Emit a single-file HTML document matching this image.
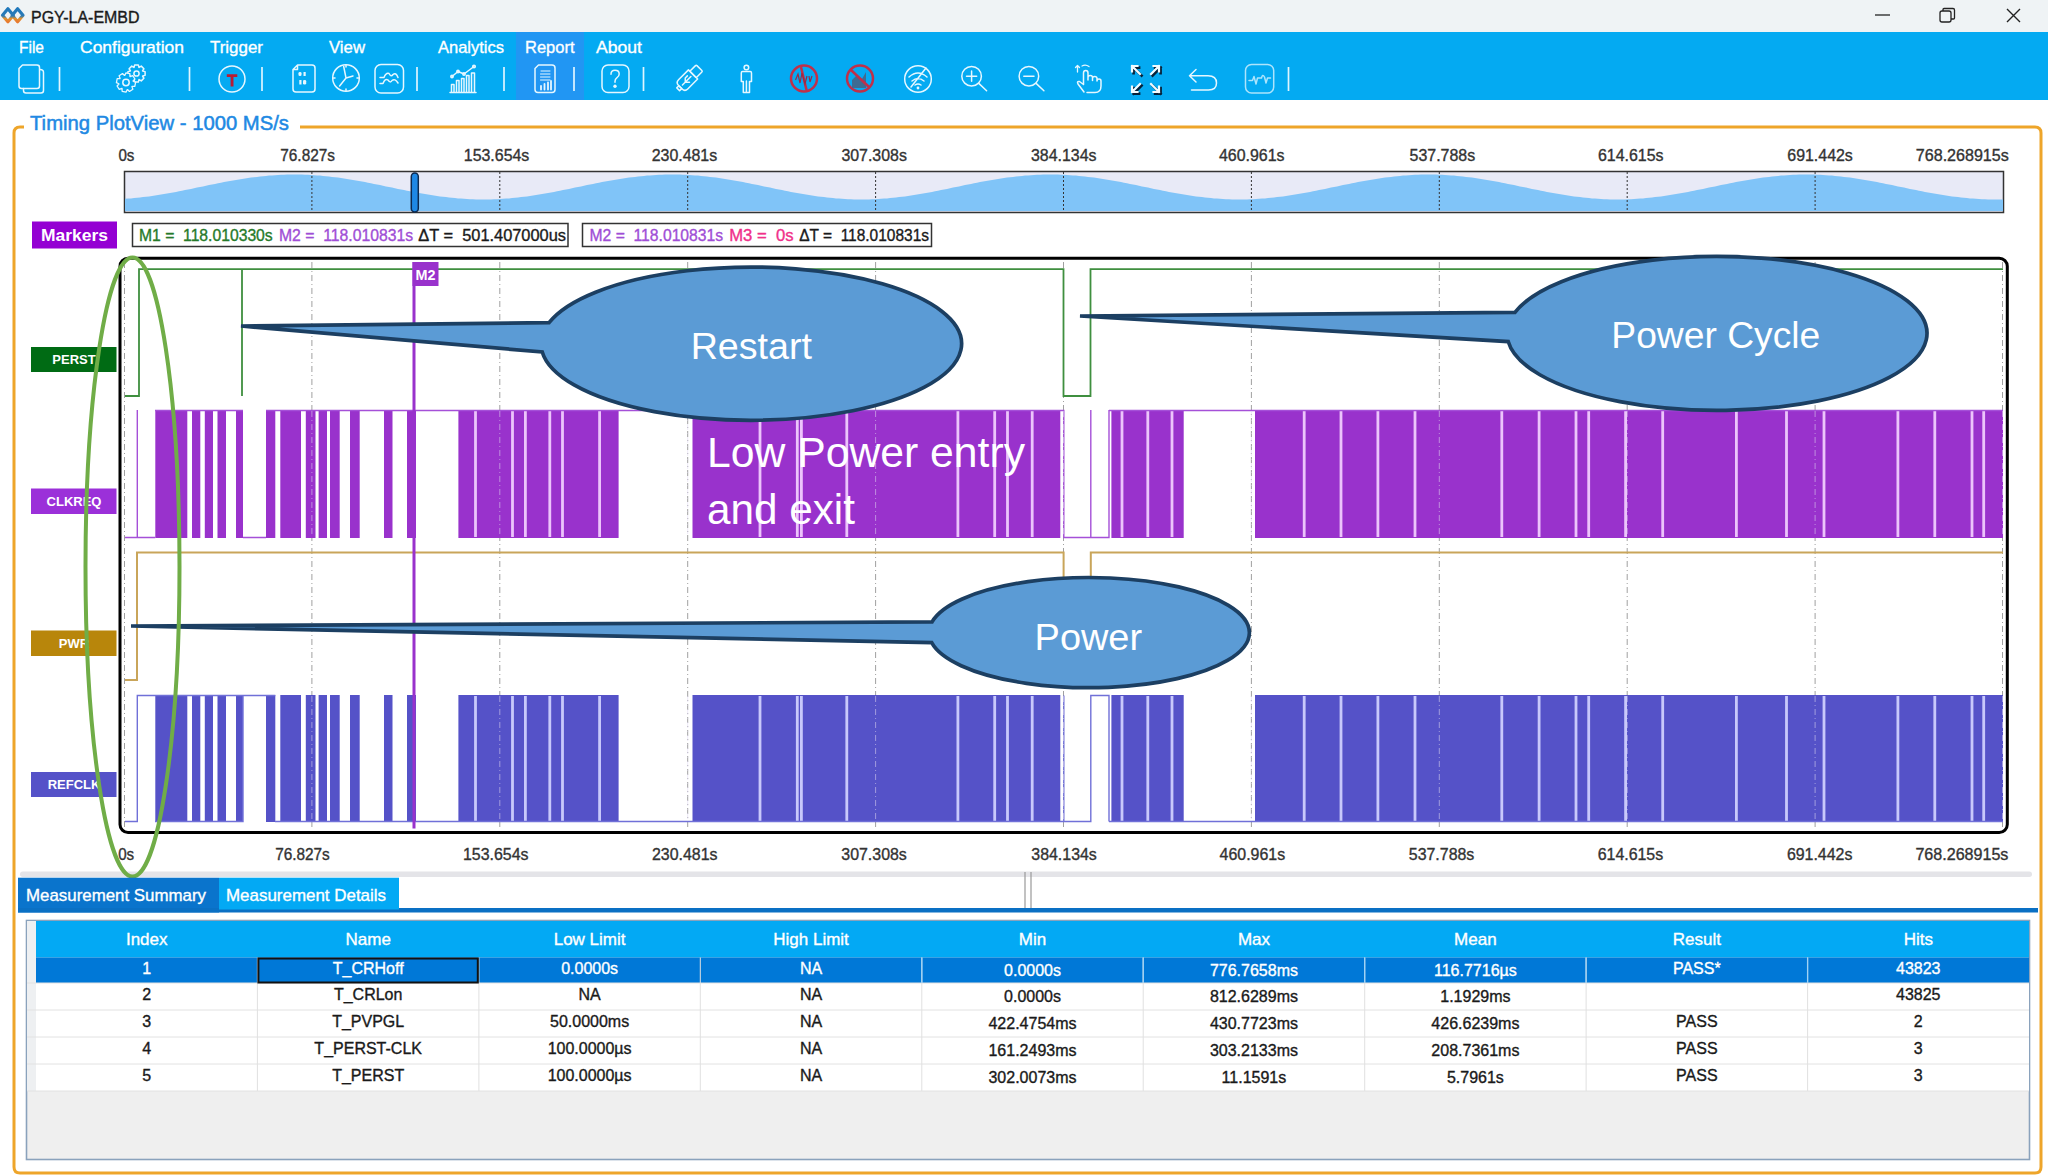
<!DOCTYPE html>
<html><head><meta charset="utf-8"><style>
*{margin:0;padding:0;box-sizing:border-box}
html,body{width:2048px;height:1176px;overflow:hidden;background:#fff;font-family:"Liberation Sans",sans-serif}
.a{position:absolute}
svg{position:absolute;left:0;top:0}
</style></head><body>

<div class="a" style="left:0;top:0;width:2048px;height:32px;background:#eff3f5"></div>
<div class="a" style="left:0;top:32px;width:2048px;height:68px;background:#04aaf2"></div>
<div class="a" style="left:516px;top:32px;width:68px;height:68px;background:#2196f3"></div>
<svg width="2048" height="1176" viewBox="0 0 2048 1176" font-family="Liberation Sans, sans-serif"><text x="31" y="22.6" font-size="16" fill="#1a1a1a" stroke="#1a1a1a" stroke-width="0.35" text-anchor="start" font-weight="normal" textLength="108.5" lengthAdjust="spacingAndGlyphs" xml:space="preserve" style="white-space:pre" >PGY-LA-EMBD</text>
<defs><linearGradient id="lg" x1="0" y1="0" x2="0" y2="1"><stop offset="0" stop-color="#1f78bb"/><stop offset="0.55" stop-color="#2a7ab5"/><stop offset="0.75" stop-color="#e0902e"/><stop offset="1" stop-color="#e87a30"/></linearGradient></defs><g fill="none" stroke="url(#lg)" stroke-width="3.2" stroke-linejoin="round"><path d="M7.9 8.8 L13.3 15.3 L7.9 21.8 L2.5 15.3 Z"/><path d="M17.6 8.8 L23 15.3 L17.6 21.8 L12.2 15.3 Z"/></g>
<line x1="1875" y1="15" x2="1890" y2="15" stroke="#222" stroke-width="1.3"/>
<rect x="1940" y="11" width="11" height="11" rx="2" fill="none" stroke="#222" stroke-width="1.3"/><path d="M1943 11 V9.5 Q1943 8.5 1944 8.5 H1953 Q1954.5 8.5 1954.5 10 V18 Q1954.5 19 1953.5 19 H1951" fill="none" stroke="#222" stroke-width="1.3"/>
<path d="M2007 9 L2020 22 M2020 9 L2007 22" stroke="#222" stroke-width="1.4"/>
<text x="19" y="52.5" font-size="17" fill="#ffffff" stroke="#ffffff" stroke-width="0.35" text-anchor="start" font-weight="normal" textLength="25" lengthAdjust="spacingAndGlyphs" xml:space="preserve" style="white-space:pre" >File</text>
<text x="80" y="52.5" font-size="17" fill="#ffffff" stroke="#ffffff" stroke-width="0.35" text-anchor="start" font-weight="normal" textLength="104" lengthAdjust="spacingAndGlyphs" xml:space="preserve" style="white-space:pre" >Configuration</text>
<text x="210" y="52.5" font-size="17" fill="#ffffff" stroke="#ffffff" stroke-width="0.35" text-anchor="start" font-weight="normal" textLength="53" lengthAdjust="spacingAndGlyphs" xml:space="preserve" style="white-space:pre" >Trigger</text>
<text x="329" y="52.5" font-size="17" fill="#ffffff" stroke="#ffffff" stroke-width="0.35" text-anchor="start" font-weight="normal" textLength="36" lengthAdjust="spacingAndGlyphs" xml:space="preserve" style="white-space:pre" >View</text>
<text x="438" y="52.5" font-size="17" fill="#ffffff" stroke="#ffffff" stroke-width="0.35" text-anchor="start" font-weight="normal" textLength="66" lengthAdjust="spacingAndGlyphs" xml:space="preserve" style="white-space:pre" >Analytics</text>
<text x="525" y="52.5" font-size="17" fill="#ffffff" stroke="#ffffff" stroke-width="0.35" text-anchor="start" font-weight="normal" textLength="49.5" lengthAdjust="spacingAndGlyphs" xml:space="preserve" style="white-space:pre" >Report</text>
<text x="596" y="52.5" font-size="17" fill="#ffffff" stroke="#ffffff" stroke-width="0.35" text-anchor="start" font-weight="normal" textLength="46" lengthAdjust="spacingAndGlyphs" xml:space="preserve" style="white-space:pre" >About</text>
<line x1="59.5" y1="67" x2="59.5" y2="91" stroke="#dff5ff" stroke-width="1.7"/>
<line x1="189.5" y1="67" x2="189.5" y2="91" stroke="#dff5ff" stroke-width="1.7"/>
<line x1="262" y1="67" x2="262" y2="91" stroke="#dff5ff" stroke-width="1.7"/>
<line x1="417" y1="67" x2="417" y2="91" stroke="#dff5ff" stroke-width="1.7"/>
<line x1="504" y1="67" x2="504" y2="91" stroke="#dff5ff" stroke-width="1.7"/>
<line x1="574" y1="67" x2="574" y2="91" stroke="#dff5ff" stroke-width="1.7"/>
<line x1="643.5" y1="67" x2="643.5" y2="91" stroke="#dff5ff" stroke-width="1.7"/>
<line x1="1288.5" y1="67" x2="1288.5" y2="91" stroke="#dff5ff" stroke-width="1.7"/>
<g fill="none" stroke="#e6f7ff" stroke-width="1.5" stroke-linecap="round" stroke-linejoin="round"><path d="M40 69.5 Q43.5 69.5 43.5 72.5 V90.5 Q43.5 93 41 93 H26 Q23.5 93 23.5 90.5 V88.5"/><path d="M22.5 65 H37 Q39.5 65 39.5 67.5 V86 Q39.5 88.5 37 88.5 H21.5 Q19 88.5 19 86 V68.5 Z"/></g>
<g fill="none" stroke="#e6f7ff" stroke-width="1.5" stroke-linecap="round" stroke-linejoin="round" stroke-width="1.3"><path d="M142.64,71.07 L145.10,71.63 L145.10,75.37 L142.64,75.93 L142.56,76.12 L143.90,78.26 L141.26,80.90 L139.12,79.56 L138.93,79.64 L138.37,82.10 L134.63,82.10 L134.07,79.64 L133.88,79.56 L131.74,80.90 L129.10,78.26 L130.44,76.12 L130.36,75.93 L127.90,75.37 L127.90,71.63 L130.36,71.07 L130.44,70.88 L129.10,68.74 L131.74,66.10 L133.88,67.44 L134.07,67.36 L134.63,64.90 L138.37,64.90 L138.93,67.36 L139.12,67.44 L141.26,66.10 L143.90,68.74 L142.56,70.88Z"/><circle cx="136.5" cy="73.5" r="2.6"/></g>
<path d="M133.09,81.23 L135.60,82.37 L134.79,86.36 L132.03,86.43 L131.91,86.62 L132.88,89.20 L129.49,91.44 L127.49,89.54 L127.27,89.59 L126.13,92.10 L122.14,91.29 L122.07,88.53 L121.88,88.41 L119.30,89.38 L117.06,85.99 L118.96,83.99 L118.91,83.77 L116.40,82.63 L117.21,78.64 L119.97,78.57 L120.09,78.38 L119.12,75.80 L122.51,73.56 L124.51,75.46 L124.73,75.41 L125.87,72.90 L129.86,73.71 L129.93,76.47 L130.12,76.59 L132.70,75.62 L134.94,79.01 L133.04,81.01Z" fill="#03a9f4" stroke="#e6f7ff" stroke-width="1.3" stroke-linejoin="round"/>
<circle cx="126" cy="82.5" r="3.2" fill="none" stroke="#e6f7ff" stroke-width="1.5" stroke-linecap="round" stroke-linejoin="round" stroke-width="1.3"/>
<circle cx="232" cy="79" r="13" fill="none" stroke="#e6f7ff" stroke-width="1.5" stroke-linecap="round" stroke-linejoin="round" stroke-width="1.8"/>
<path d="M226.8 74.3 H237.3 V77 H233.5 V86.6 H230.6 V77 H226.8 Z" fill="#b81c34"/>
<g fill="none" stroke="#e6f7ff" stroke-width="1.5" stroke-linecap="round" stroke-linejoin="round" stroke-width="1.4"><path d="M297.5 65 H312 Q315 65 315 68 V89 Q315 92 312 92 H296 Q293 92 293 89 V69.5 Z M293 69.5 H297.5 V65"/></g>
<g fill="#e6f7ff"><rect x="298.5" y="72" width="3" height="4" rx="1.3"/><rect x="303.5" y="72" width="2.2" height="4"/><rect x="299.3" y="80" width="2.2" height="4.5"/><rect x="303" y="80" width="3.2" height="4.5" rx="1.3"/></g>
<g fill="none" stroke="#e6f7ff" stroke-width="1.5" stroke-linecap="round" stroke-linejoin="round" stroke-width="1.5"><circle cx="346" cy="78" r="13.3"/><path d="M343.7 66.5 L346 78 L353 76 M346 78 L339.6 86 M346 65.5 V67 M346 89 V90.5 M333.5 78 H335 M357 78 H358.5"/></g>
<g fill="none" stroke="#e6f7ff" stroke-width="1.5" stroke-linecap="round" stroke-linejoin="round" stroke-width="1.5"><rect x="375" y="64.5" width="28.5" height="28.5" rx="6"/><path d="M380 77.5 H384 Q386 72.5 389 73.5 Q391 77.5 393 74.5 Q396 72 398 77.5 M380 83.5 H383 Q385 78 388 80 Q390.5 83.5 392 80.5 Q395 78 398 83"/></g>
<g fill="none" stroke="#e6f7ff" stroke-width="1.5" stroke-linecap="round" stroke-linejoin="round" stroke-width="1.3"><path d="M450 92.5 H476 M451.5 92 V84.5 H454 V92 M456.5 92 V80.5 H459 V92 M461.5 92 V78.5 H464 V92 M466.5 92 V75.5 H469 V92 M471.5 92 V73 H474.5 V92 M452 76.5 L458 71.5 L464 74 L474 66.5"/><circle cx="452" cy="76.5" r="1.2"/><circle cx="458" cy="71.5" r="1.2"/><circle cx="464" cy="74" r="1.2"/><circle cx="474" cy="66.5" r="1.3"/></g>
<g fill="none" stroke="#e6f7ff" stroke-width="1.5" stroke-linecap="round" stroke-linejoin="round" stroke-width="1.3"><path d="M538.5 65 H552 Q555 65 555 68 V89.5 Q555 92.5 552 92.5 H538 Q535 92.5 535 89.5 V68.5 Z"/><path d="M541 71 H550 M540.5 74 H550 M540.5 77 H550 M540.5 80 H550" stroke-width="1"/><path d="M541 89.5 V86 M544.5 89.5 V84 M548 89.5 V82.5 M551 89.5 V81" stroke-width="1.8"/></g>
<rect x="602" y="65" width="27" height="27.5" rx="6" fill="none" stroke="#e6f7ff" stroke-width="1.5" stroke-linecap="round" stroke-linejoin="round" stroke-width="1.6"/>
<path d="M611 74.2 Q611 70.3 615 70.3 Q619.2 70.3 619.2 74 Q619.2 76.3 616.8 77.8 Q615 79 615 81.2 V82.3" fill="none" stroke="#e6f7ff" stroke-width="1.5" stroke-linecap="round" stroke-linejoin="round" stroke-width="2.6"/>
<circle cx="615" cy="86.3" r="1.7" fill="#e6f7ff"/>
<g transform="translate(689.5,78) rotate(-45)" fill="none" stroke="#e6f7ff" stroke-width="1.5" stroke-linecap="round" stroke-linejoin="round" stroke-width="1.4"><rect x="5" y="-4.5" width="9" height="9" rx="1"/><path d="M5 -6.5 H-9 Q-13 -6.5 -13 -2.5 V2.5 Q-13 6.5 -9 6.5 H5 Z"/><path d="M-16 -2 V2 H-13 V-2 Z M-10 0 H2 M-6 0 L-3 -3 H0 M-6 0 L-3 3"/></g>
<g fill="none" stroke="#e6f7ff" stroke-width="1.5" stroke-linecap="round" stroke-linejoin="round" stroke-width="1.3"><circle cx="746.4" cy="67.5" r="2.3"/><path d="M742.5 71.5 H750.3 Q751.5 71.5 751.5 73 V81.5 H749.5 V92.5 H743.3 V81.5 H741.3 V73 Q741.3 71.5 742.5 71.5 Z M746.4 81 V92"/></g>
<g fill="none" stroke="#c0304a" stroke-width="2.5"><circle cx="804" cy="78.5" r="13"/><path d="M801 67 L806.5 90"/></g>
<path d="M795.5 80 L798 74 L800 83 L802 73 L805 84 L807 76 M809 76 L810 82 L812 76" fill="none" stroke="#9a2a45" stroke-width="1.2"/>
<g fill="none" stroke="#c0304a" stroke-width="2.5"><circle cx="860" cy="78.5" r="13"/></g>
<path d="M852 88 V80 L857 75 L862 79 L866 72 V88 Z" fill="#4a6080" opacity="0.85"/>
<path d="M851 70 L869 87" stroke="#c0304a" stroke-width="2.5"/>
<g fill="none" stroke="#e6f7ff" stroke-width="1.5" stroke-linecap="round" stroke-linejoin="round" stroke-width="1.8"><circle cx="918" cy="79" r="13.3"/><path d="M909 77 Q918 69 927 77 M912 81 Q918 76 924 81 M915 85 Q918 83 921 85 M911 87 L926 68"/></g>
<circle cx="918" cy="88" r="1.4" fill="#e6f7ff"/>
<g fill="none" stroke="#e6f7ff" stroke-width="1.5" stroke-linecap="round" stroke-linejoin="round" stroke-width="1.8"><circle cx="971.6" cy="76.2" r="9.8"/><path d="M978.8 83.4 L986.6 90.7 M966.5 76.2 H976.7 M971.6 71.1 V81.3"/></g>
<g fill="none" stroke="#e6f7ff" stroke-width="1.5" stroke-linecap="round" stroke-linejoin="round" stroke-width="1.8"><circle cx="1028.9" cy="76.2" r="9.8"/><path d="M1036.1 83.4 L1043.9 90.7 M1023.8 76.2 H1034"/></g>
<g fill="none" stroke="#e6f7ff" stroke-width="1.5" stroke-linecap="round" stroke-linejoin="round" stroke-width="1.5"><path d="M1084 92 L1078 84 Q1076.5 81 1079.5 81.5 L1083.5 84.5 V73 Q1083.5 70.5 1085.8 70.5 Q1088 70.5 1088 73 V80 V77.5 Q1088 75.5 1090.3 75.5 Q1092.5 75.5 1092.5 77.5 V80.5 V78.5 Q1092.5 76.5 1094.7 76.5 Q1097 76.5 1097 78.5 V81 Q1097 79 1099 79 Q1101 79 1101 81 V86 Q1101 92.5 1095 92.5 H1087"/><path d="M1077.5 72 V65.5 M1075.5 67.5 L1077.5 65.5 L1079.5 67.5 M1082 66 Q1085.5 64 1089 66.5" stroke-width="1.3"/></g>
<path d="M1133.6 67.6 L1141.6 75.6 M1133.6 67.6 V73.1 M1133.6 67.6 H1139.1 M1160.6 67.6 L1152.6 75.6 M1160.6 67.6 V73.1 M1160.6 67.6 H1155.1 M1133.6 93.6 L1141.6 85.6 M1133.6 93.6 V88.1 M1133.6 93.6 H1139.1 M1160.6 93.6 L1152.6 85.6 M1160.6 93.6 V88.1 M1160.6 93.6 H1155.1" fill="none" stroke="#06223a" stroke-width="2.6" stroke-linecap="square"/>
<path d="M1132 66 L1140 74 M1132 66 V71.5 M1132 66 H1137.5 M1159 66 L1151 74 M1159 66 V71.5 M1159 66 H1153.5 M1132 92 L1140 84 M1132 92 V86.5 M1132 92 H1137.5 M1159 92 L1151 84 M1159 92 V86.5 M1159 92 H1153.5" fill="none" stroke="#f2fbff" stroke-width="2.2" stroke-linecap="square"/>
<g fill="none" stroke="#e6f7ff" stroke-width="1.5" stroke-linecap="round" stroke-linejoin="round" stroke-width="2"><path d="M1196 69.5 L1189.5 75.7 L1196 82 M1189.5 75.7 H1208 Q1216.5 75.7 1216.5 83 Q1216.5 90 1208.5 90 H1191.5"/></g>
<g fill="none" stroke="#e6f7ff" stroke-width="1.5" stroke-linecap="round" stroke-linejoin="round" stroke-width="1.4" stroke-opacity="0.75"><rect x="1245.5" y="64.5" width="28.2" height="28.5" rx="6"/><path d="M1249 80.5 H1252.5 L1254 76.5 L1256 84 L1257.5 78 H1261.5 Q1262.5 73.5 1264.5 77 L1266 83 L1267.5 78 H1270.5"/></g>
<path d="M300 127 H2035 Q2041 127 2041 133 V1167 Q2041 1173 2035 1173 H20 Q14 1173 14 1167 V133 Q14 127 20 127 H24" fill="none" stroke="#eea52a" stroke-width="3"/>
<text x="30" y="130" font-size="20" fill="#2189e3" stroke="#2189e3" stroke-width="0.5" text-anchor="start" font-weight="normal" textLength="259" lengthAdjust="spacingAndGlyphs" xml:space="preserve" style="white-space:pre" >Timing PlotView - 1000 MS/s</text>
<text x="118.4" y="161" font-size="16" fill="#333" stroke="#333" stroke-width="0.35" text-anchor="start" font-weight="normal" textLength="16" lengthAdjust="spacingAndGlyphs" xml:space="preserve" style="white-space:pre" >0s</text>
<text x="280.3" y="161" font-size="16" fill="#333" stroke="#333" stroke-width="0.35" text-anchor="start" font-weight="normal" textLength="54.6" lengthAdjust="spacingAndGlyphs" xml:space="preserve" style="white-space:pre" >76.827s</text>
<text x="463.8" y="161" font-size="16" fill="#333" stroke="#333" stroke-width="0.35" text-anchor="start" font-weight="normal" textLength="65.5" lengthAdjust="spacingAndGlyphs" xml:space="preserve" style="white-space:pre" >153.654s</text>
<text x="651.7" y="161" font-size="16" fill="#333" stroke="#333" stroke-width="0.35" text-anchor="start" font-weight="normal" textLength="65.5" lengthAdjust="spacingAndGlyphs" xml:space="preserve" style="white-space:pre" >230.481s</text>
<text x="841.4" y="161" font-size="16" fill="#333" stroke="#333" stroke-width="0.35" text-anchor="start" font-weight="normal" textLength="65.5" lengthAdjust="spacingAndGlyphs" xml:space="preserve" style="white-space:pre" >307.308s</text>
<text x="1031" y="161" font-size="16" fill="#333" stroke="#333" stroke-width="0.35" text-anchor="start" font-weight="normal" textLength="65.5" lengthAdjust="spacingAndGlyphs" xml:space="preserve" style="white-space:pre" >384.134s</text>
<text x="1219" y="161" font-size="16" fill="#333" stroke="#333" stroke-width="0.35" text-anchor="start" font-weight="normal" textLength="65.5" lengthAdjust="spacingAndGlyphs" xml:space="preserve" style="white-space:pre" >460.961s</text>
<text x="1409.6" y="161" font-size="16" fill="#333" stroke="#333" stroke-width="0.35" text-anchor="start" font-weight="normal" textLength="65.5" lengthAdjust="spacingAndGlyphs" xml:space="preserve" style="white-space:pre" >537.788s</text>
<text x="1598" y="161" font-size="16" fill="#333" stroke="#333" stroke-width="0.35" text-anchor="start" font-weight="normal" textLength="65.5" lengthAdjust="spacingAndGlyphs" xml:space="preserve" style="white-space:pre" >614.615s</text>
<text x="1787.3" y="161" font-size="16" fill="#333" stroke="#333" stroke-width="0.35" text-anchor="start" font-weight="normal" textLength="65.5" lengthAdjust="spacingAndGlyphs" xml:space="preserve" style="white-space:pre" >691.442s</text>
<text x="1915.8" y="161" font-size="16" fill="#333" stroke="#333" stroke-width="0.35" text-anchor="start" font-weight="normal" textLength="93" lengthAdjust="spacingAndGlyphs" xml:space="preserve" style="white-space:pre" >768.268915s</text>
<text x="118.2" y="859.7" font-size="16" fill="#333" stroke="#333" stroke-width="0.35" text-anchor="start" font-weight="normal" textLength="16" lengthAdjust="spacingAndGlyphs" xml:space="preserve" style="white-space:pre" >0s</text>
<text x="275.2" y="859.7" font-size="16" fill="#333" stroke="#333" stroke-width="0.35" text-anchor="start" font-weight="normal" textLength="54.6" lengthAdjust="spacingAndGlyphs" xml:space="preserve" style="white-space:pre" >76.827s</text>
<text x="463" y="859.7" font-size="16" fill="#333" stroke="#333" stroke-width="0.35" text-anchor="start" font-weight="normal" textLength="65.5" lengthAdjust="spacingAndGlyphs" xml:space="preserve" style="white-space:pre" >153.654s</text>
<text x="652" y="859.7" font-size="16" fill="#333" stroke="#333" stroke-width="0.35" text-anchor="start" font-weight="normal" textLength="65.5" lengthAdjust="spacingAndGlyphs" xml:space="preserve" style="white-space:pre" >230.481s</text>
<text x="841.3" y="859.7" font-size="16" fill="#333" stroke="#333" stroke-width="0.35" text-anchor="start" font-weight="normal" textLength="65.5" lengthAdjust="spacingAndGlyphs" xml:space="preserve" style="white-space:pre" >307.308s</text>
<text x="1031.3" y="859.7" font-size="16" fill="#333" stroke="#333" stroke-width="0.35" text-anchor="start" font-weight="normal" textLength="65.5" lengthAdjust="spacingAndGlyphs" xml:space="preserve" style="white-space:pre" >384.134s</text>
<text x="1219.6" y="859.7" font-size="16" fill="#333" stroke="#333" stroke-width="0.35" text-anchor="start" font-weight="normal" textLength="65.5" lengthAdjust="spacingAndGlyphs" xml:space="preserve" style="white-space:pre" >460.961s</text>
<text x="1408.8" y="859.7" font-size="16" fill="#333" stroke="#333" stroke-width="0.35" text-anchor="start" font-weight="normal" textLength="65.5" lengthAdjust="spacingAndGlyphs" xml:space="preserve" style="white-space:pre" >537.788s</text>
<text x="1597.7" y="859.7" font-size="16" fill="#333" stroke="#333" stroke-width="0.35" text-anchor="start" font-weight="normal" textLength="65.5" lengthAdjust="spacingAndGlyphs" xml:space="preserve" style="white-space:pre" >614.615s</text>
<text x="1786.9" y="859.7" font-size="16" fill="#333" stroke="#333" stroke-width="0.35" text-anchor="start" font-weight="normal" textLength="65.5" lengthAdjust="spacingAndGlyphs" xml:space="preserve" style="white-space:pre" >691.442s</text>
<text x="1915.4" y="859.7" font-size="16" fill="#333" stroke="#333" stroke-width="0.35" text-anchor="start" font-weight="normal" textLength="93" lengthAdjust="spacingAndGlyphs" xml:space="preserve" style="white-space:pre" >768.268915s</text>
<rect x="124.5" y="171.5" width="1879" height="41" fill="#e8eaf7" stroke="#333" stroke-width="1.5"/>
<path d="M125,211 L125,198.8 L128,198.6 L131,198.4 L134,198.1 L137,197.8 L140,197.5 L143,197.1 L146,196.8 L149,196.4 L152,195.9 L155,195.5 L158,195.0 L161,194.5 L164,194.0 L167,193.5 L170,193.0 L173,192.4 L176,191.9 L179,191.3 L182,190.7 L185,190.1 L188,189.5 L191,188.9 L194,188.2 L197,187.6 L200,187.0 L203,186.4 L206,185.8 L209,185.1 L212,184.5 L215,183.9 L218,183.3 L221,182.7 L224,182.1 L227,181.6 L230,181.0 L233,180.5 L236,180.0 L239,179.5 L242,179.0 L245,178.5 L248,178.1 L251,177.6 L254,177.2 L257,176.9 L260,176.5 L263,176.2 L266,175.9 L269,175.6 L272,175.4 L275,175.2 L278,175.0 L281,174.8 L284,174.7 L287,174.6 L290,174.5 L293,174.5 L296,174.5 L299,174.5 L302,174.6 L305,174.7 L308,174.8 L311,175.0 L314,175.2 L317,175.4 L320,175.6 L323,175.9 L326,176.2 L329,176.5 L332,176.9 L335,177.2 L338,177.6 L341,178.1 L344,178.5 L347,179.0 L350,179.5 L353,180.0 L356,180.5 L359,181.0 L362,181.6 L365,182.1 L368,182.7 L371,183.3 L374,183.9 L377,184.5 L380,185.1 L383,185.8 L386,186.4 L389,187.0 L392,187.6 L395,188.2 L398,188.9 L401,189.5 L404,190.1 L407,190.7 L410,191.3 L413,191.9 L416,192.4 L419,193.0 L422,193.5 L425,194.0 L428,194.5 L431,195.0 L434,195.5 L437,195.9 L440,196.4 L443,196.8 L446,197.1 L449,197.5 L452,197.8 L455,198.1 L458,198.4 L461,198.6 L464,198.8 L467,199.0 L470,199.2 L473,199.3 L476,199.4 L479,199.5 L482,199.5 L485,199.5 L488,199.5 L491,199.4 L494,199.3 L497,199.2 L500,199.0 L503,198.8 L506,198.6 L509,198.4 L512,198.1 L515,197.8 L518,197.5 L521,197.1 L524,196.8 L527,196.4 L530,195.9 L533,195.5 L536,195.0 L539,194.5 L542,194.0 L545,193.5 L548,193.0 L551,192.4 L554,191.9 L557,191.3 L560,190.7 L563,190.1 L566,189.5 L569,188.9 L572,188.2 L575,187.6 L578,187.0 L581,186.4 L584,185.8 L587,185.1 L590,184.5 L593,183.9 L596,183.3 L599,182.7 L602,182.1 L605,181.6 L608,181.0 L611,180.5 L614,180.0 L617,179.5 L620,179.0 L623,178.5 L626,178.1 L629,177.6 L632,177.2 L635,176.9 L638,176.5 L641,176.2 L644,175.9 L647,175.6 L650,175.4 L653,175.2 L656,175.0 L659,174.8 L662,174.7 L665,174.6 L668,174.5 L671,174.5 L674,174.5 L677,174.5 L680,174.6 L683,174.7 L686,174.8 L689,175.0 L692,175.2 L695,175.4 L698,175.6 L701,175.9 L704,176.2 L707,176.5 L710,176.9 L713,177.2 L716,177.6 L719,178.1 L722,178.5 L725,179.0 L728,179.5 L731,180.0 L734,180.5 L737,181.0 L740,181.6 L743,182.1 L746,182.7 L749,183.3 L752,183.9 L755,184.5 L758,185.1 L761,185.8 L764,186.4 L767,187.0 L770,187.6 L773,188.2 L776,188.9 L779,189.5 L782,190.1 L785,190.7 L788,191.3 L791,191.9 L794,192.4 L797,193.0 L800,193.5 L803,194.0 L806,194.5 L809,195.0 L812,195.5 L815,195.9 L818,196.4 L821,196.8 L824,197.1 L827,197.5 L830,197.8 L833,198.1 L836,198.4 L839,198.6 L842,198.8 L845,199.0 L848,199.2 L851,199.3 L854,199.4 L857,199.5 L860,199.5 L863,199.5 L866,199.5 L869,199.4 L872,199.3 L875,199.2 L878,199.0 L881,198.8 L884,198.6 L887,198.4 L890,198.1 L893,197.8 L896,197.5 L899,197.1 L902,196.8 L905,196.4 L908,195.9 L911,195.5 L914,195.0 L917,194.5 L920,194.0 L923,193.5 L926,193.0 L929,192.4 L932,191.9 L935,191.3 L938,190.7 L941,190.1 L944,189.5 L947,188.9 L950,188.2 L953,187.6 L956,187.0 L959,186.4 L962,185.8 L965,185.1 L968,184.5 L971,183.9 L974,183.3 L977,182.7 L980,182.1 L983,181.6 L986,181.0 L989,180.5 L992,180.0 L995,179.5 L998,179.0 L1001,178.5 L1004,178.1 L1007,177.6 L1010,177.2 L1013,176.9 L1016,176.5 L1019,176.2 L1022,175.9 L1025,175.6 L1028,175.4 L1031,175.2 L1034,175.0 L1037,174.8 L1040,174.7 L1043,174.6 L1046,174.5 L1049,174.5 L1052,174.5 L1055,174.5 L1058,174.6 L1061,174.7 L1064,174.8 L1067,175.0 L1070,175.2 L1073,175.4 L1076,175.6 L1079,175.9 L1082,176.2 L1085,176.5 L1088,176.9 L1091,177.2 L1094,177.6 L1097,178.1 L1100,178.5 L1103,179.0 L1106,179.5 L1109,180.0 L1112,180.5 L1115,181.0 L1118,181.6 L1121,182.1 L1124,182.7 L1127,183.3 L1130,183.9 L1133,184.5 L1136,185.1 L1139,185.8 L1142,186.4 L1145,187.0 L1148,187.6 L1151,188.2 L1154,188.9 L1157,189.5 L1160,190.1 L1163,190.7 L1166,191.3 L1169,191.9 L1172,192.4 L1175,193.0 L1178,193.5 L1181,194.0 L1184,194.5 L1187,195.0 L1190,195.5 L1193,195.9 L1196,196.4 L1199,196.8 L1202,197.1 L1205,197.5 L1208,197.8 L1211,198.1 L1214,198.4 L1217,198.6 L1220,198.8 L1223,199.0 L1226,199.2 L1229,199.3 L1232,199.4 L1235,199.5 L1238,199.5 L1241,199.5 L1244,199.5 L1247,199.4 L1250,199.3 L1253,199.2 L1256,199.0 L1259,198.8 L1262,198.6 L1265,198.4 L1268,198.1 L1271,197.8 L1274,197.5 L1277,197.1 L1280,196.8 L1283,196.4 L1286,195.9 L1289,195.5 L1292,195.0 L1295,194.5 L1298,194.0 L1301,193.5 L1304,193.0 L1307,192.4 L1310,191.9 L1313,191.3 L1316,190.7 L1319,190.1 L1322,189.5 L1325,188.9 L1328,188.2 L1331,187.6 L1334,187.0 L1337,186.4 L1340,185.8 L1343,185.1 L1346,184.5 L1349,183.9 L1352,183.3 L1355,182.7 L1358,182.1 L1361,181.6 L1364,181.0 L1367,180.5 L1370,180.0 L1373,179.5 L1376,179.0 L1379,178.5 L1382,178.1 L1385,177.6 L1388,177.2 L1391,176.9 L1394,176.5 L1397,176.2 L1400,175.9 L1403,175.6 L1406,175.4 L1409,175.2 L1412,175.0 L1415,174.8 L1418,174.7 L1421,174.6 L1424,174.5 L1427,174.5 L1430,174.5 L1433,174.5 L1436,174.6 L1439,174.7 L1442,174.8 L1445,175.0 L1448,175.2 L1451,175.4 L1454,175.6 L1457,175.9 L1460,176.2 L1463,176.5 L1466,176.9 L1469,177.2 L1472,177.6 L1475,178.1 L1478,178.5 L1481,179.0 L1484,179.5 L1487,180.0 L1490,180.5 L1493,181.0 L1496,181.6 L1499,182.1 L1502,182.7 L1505,183.3 L1508,183.9 L1511,184.5 L1514,185.1 L1517,185.8 L1520,186.4 L1523,187.0 L1526,187.6 L1529,188.2 L1532,188.9 L1535,189.5 L1538,190.1 L1541,190.7 L1544,191.3 L1547,191.9 L1550,192.4 L1553,193.0 L1556,193.5 L1559,194.0 L1562,194.5 L1565,195.0 L1568,195.5 L1571,195.9 L1574,196.4 L1577,196.8 L1580,197.1 L1583,197.5 L1586,197.8 L1589,198.1 L1592,198.4 L1595,198.6 L1598,198.8 L1601,199.0 L1604,199.2 L1607,199.3 L1610,199.4 L1613,199.5 L1616,199.5 L1619,199.5 L1622,199.5 L1625,199.4 L1628,199.3 L1631,199.2 L1634,199.0 L1637,198.8 L1640,198.6 L1643,198.4 L1646,198.1 L1649,197.8 L1652,197.5 L1655,197.1 L1658,196.8 L1661,196.4 L1664,195.9 L1667,195.5 L1670,195.0 L1673,194.5 L1676,194.0 L1679,193.5 L1682,193.0 L1685,192.4 L1688,191.9 L1691,191.3 L1694,190.7 L1697,190.1 L1700,189.5 L1703,188.9 L1706,188.2 L1709,187.6 L1712,187.0 L1715,186.4 L1718,185.8 L1721,185.1 L1724,184.5 L1727,183.9 L1730,183.3 L1733,182.7 L1736,182.1 L1739,181.6 L1742,181.0 L1745,180.5 L1748,180.0 L1751,179.5 L1754,179.0 L1757,178.5 L1760,178.1 L1763,177.6 L1766,177.2 L1769,176.9 L1772,176.5 L1775,176.2 L1778,175.9 L1781,175.6 L1784,175.4 L1787,175.2 L1790,175.0 L1793,174.8 L1796,174.7 L1799,174.6 L1802,174.5 L1805,174.5 L1808,174.5 L1811,174.5 L1814,174.6 L1817,174.7 L1820,174.8 L1823,175.0 L1826,175.2 L1829,175.4 L1832,175.6 L1835,175.9 L1838,176.2 L1841,176.5 L1844,176.9 L1847,177.2 L1850,177.6 L1853,178.1 L1856,178.5 L1859,179.0 L1862,179.5 L1865,180.0 L1868,180.5 L1871,181.0 L1874,181.6 L1877,182.1 L1880,182.7 L1883,183.3 L1886,183.9 L1889,184.5 L1892,185.1 L1895,185.8 L1898,186.4 L1901,187.0 L1904,187.6 L1907,188.2 L1910,188.9 L1913,189.5 L1916,190.1 L1919,190.7 L1922,191.3 L1925,191.9 L1928,192.4 L1931,193.0 L1934,193.5 L1937,194.0 L1940,194.5 L1943,195.0 L1946,195.5 L1949,195.9 L1952,196.4 L1955,196.8 L1958,197.1 L1961,197.5 L1964,197.8 L1967,198.1 L1970,198.4 L1973,198.6 L1976,198.8 L1979,199.0 L1982,199.2 L1985,199.3 L1988,199.4 L1991,199.5 L1994,199.5 L1997,199.5 L2000,199.5 L2003,199.4 L2003,211 Z" fill="#80c4f8"/>
<line x1="311.9" y1="172" x2="311.9" y2="212" stroke="#333" stroke-width="1" stroke-dasharray="2,2"/>
<line x1="499.8" y1="172" x2="499.8" y2="212" stroke="#333" stroke-width="1" stroke-dasharray="2,2"/>
<line x1="687.7" y1="172" x2="687.7" y2="212" stroke="#333" stroke-width="1" stroke-dasharray="2,2"/>
<line x1="875.6" y1="172" x2="875.6" y2="212" stroke="#333" stroke-width="1" stroke-dasharray="2,2"/>
<line x1="1063.5" y1="172" x2="1063.5" y2="212" stroke="#333" stroke-width="1" stroke-dasharray="2,2"/>
<line x1="1251.4" y1="172" x2="1251.4" y2="212" stroke="#333" stroke-width="1" stroke-dasharray="2,2"/>
<line x1="1439.3" y1="172" x2="1439.3" y2="212" stroke="#333" stroke-width="1" stroke-dasharray="2,2"/>
<line x1="1627.2" y1="172" x2="1627.2" y2="212" stroke="#333" stroke-width="1" stroke-dasharray="2,2"/>
<line x1="1815.1" y1="172" x2="1815.1" y2="212" stroke="#333" stroke-width="1" stroke-dasharray="2,2"/>
<rect x="411.3" y="173" width="7" height="39" rx="3.5" fill="#1e88e5" stroke="#0d2a50" stroke-width="1.5"/>
<rect x="32" y="221.5" width="85" height="27" fill="#9400d3"/>
<text x="74.5" y="240.5" font-size="16" fill="#fff" text-anchor="middle" font-weight="bold" textLength="67" lengthAdjust="spacingAndGlyphs" xml:space="preserve" style="white-space:pre" >Markers</text>
<rect x="132.5" y="223.5" width="435.5" height="23" fill="#fff" stroke="#333" stroke-width="1.5"/>
<rect x="582.5" y="223.5" width="349" height="23" fill="#fff" stroke="#333" stroke-width="1.5"/>
<text x="139" y="241" font-size="16" fill="#267a2a" stroke="#267a2a" stroke-width="0.35" text-anchor="start" font-weight="normal" textLength="133.7" lengthAdjust="spacingAndGlyphs" xml:space="preserve" style="white-space:pre" >M1 =  118.010330s</text>
<text x="279" y="241" font-size="16" fill="#a04ed6" stroke="#a04ed6" stroke-width="0.35" text-anchor="start" font-weight="normal" textLength="134.1" lengthAdjust="spacingAndGlyphs" xml:space="preserve" style="white-space:pre" >M2 =  118.010831s</text>
<text x="418.3" y="241" font-size="16" fill="#1a1a1a" stroke="#1a1a1a" stroke-width="0.35" text-anchor="start" font-weight="normal" textLength="147.7" lengthAdjust="spacingAndGlyphs" xml:space="preserve" style="white-space:pre" >ΔT =  501.407000us</text>
<text x="589.5" y="241" font-size="16" fill="#a04ed6" stroke="#a04ed6" stroke-width="0.35" text-anchor="start" font-weight="normal" textLength="133.6" lengthAdjust="spacingAndGlyphs" xml:space="preserve" style="white-space:pre" >M2 =  118.010831s</text>
<text x="729.2" y="241" font-size="16" fill="#f0308a" stroke="#f0308a" stroke-width="0.35" text-anchor="start" font-weight="normal" textLength="64.4" lengthAdjust="spacingAndGlyphs" xml:space="preserve" style="white-space:pre" >M3 =  0s</text>
<text x="799.2" y="241" font-size="16" fill="#1a1a1a" stroke="#1a1a1a" stroke-width="0.35" text-anchor="start" font-weight="normal" textLength="129.8" lengthAdjust="spacingAndGlyphs" xml:space="preserve" style="white-space:pre" >ΔT =  118.010831s</text>
<rect x="120" y="258.3" width="1887.3" height="574.2" rx="8" fill="#fff" stroke="#000" stroke-width="3"/>
<line x1="124.5" y1="262" x2="124.5" y2="829" stroke="#a0a0a0" stroke-width="1" stroke-dasharray="6,3,1,3"/>
<line x1="311.9" y1="262" x2="311.9" y2="829" stroke="#a0a0a0" stroke-width="1" stroke-dasharray="6,3,1,3"/>
<line x1="499.8" y1="262" x2="499.8" y2="829" stroke="#a0a0a0" stroke-width="1" stroke-dasharray="6,3,1,3"/>
<line x1="687.7" y1="262" x2="687.7" y2="829" stroke="#a0a0a0" stroke-width="1" stroke-dasharray="6,3,1,3"/>
<line x1="875.6" y1="262" x2="875.6" y2="829" stroke="#a0a0a0" stroke-width="1" stroke-dasharray="6,3,1,3"/>
<line x1="1063.5" y1="262" x2="1063.5" y2="829" stroke="#a0a0a0" stroke-width="1" stroke-dasharray="6,3,1,3"/>
<line x1="1251.4" y1="262" x2="1251.4" y2="829" stroke="#a0a0a0" stroke-width="1" stroke-dasharray="6,3,1,3"/>
<line x1="1439.3" y1="262" x2="1439.3" y2="829" stroke="#a0a0a0" stroke-width="1" stroke-dasharray="6,3,1,3"/>
<line x1="1627.2" y1="262" x2="1627.2" y2="829" stroke="#a0a0a0" stroke-width="1" stroke-dasharray="6,3,1,3"/>
<line x1="1815.1" y1="262" x2="1815.1" y2="829" stroke="#a0a0a0" stroke-width="1" stroke-dasharray="6,3,1,3"/>
<line x1="2002.5" y1="262" x2="2002.5" y2="829" stroke="#a0a0a0" stroke-width="1" stroke-dasharray="6,3,1,3"/>
<rect x="31" y="347" width="85.5" height="25" fill="#006b14"/>
<text x="74" y="364.2" font-size="13" fill="#fff" text-anchor="middle" font-weight="bold" xml:space="preserve" style="white-space:pre" >PERST</text>
<rect x="31" y="488.5" width="85.5" height="25.5" fill="#9b30d9"/>
<text x="74" y="505.95" font-size="13" fill="#fff" text-anchor="middle" font-weight="bold" xml:space="preserve" style="white-space:pre" >CLKREQ</text>
<rect x="31" y="630.5" width="85.5" height="25.5" fill="#b8860b"/>
<text x="74" y="647.95" font-size="13" fill="#fff" text-anchor="middle" font-weight="bold" xml:space="preserve" style="white-space:pre" >PWR</text>
<rect x="31" y="772" width="85.5" height="25" fill="#5552c8"/>
<text x="74" y="789.2" font-size="13" fill="#fff" text-anchor="middle" font-weight="bold" xml:space="preserve" style="white-space:pre" >REFCLK</text>
<path d="M125 396 H139 V269.2 H242 V396 M242 269.2 H1063.5 V396 H1090.5 V269.2 H2003" fill="none" stroke="#3f8f3f" stroke-width="1.8"/>
<path d="M125 680 H137 V552.4 H1063.6 V680 H1090.8 V552.4 H2003" fill="none" stroke="#c9a55a" stroke-width="2"/>
<rect x="155.3" y="410" width="32.0" height="128" fill="#9932cc"/>
<rect x="192.0" y="410" width="8.3" height="128" fill="#9932cc"/>
<rect x="204.8" y="410" width="8.2" height="128" fill="#9932cc"/>
<rect x="217.5" y="410" width="8.5" height="128" fill="#9932cc"/>
<rect x="236.0" y="410" width="7.0" height="128" fill="#9932cc"/>
<rect x="266.0" y="410" width="9.3" height="128" fill="#9932cc"/>
<rect x="280.3" y="410" width="20.7" height="128" fill="#9932cc"/>
<rect x="305.8" y="410" width="9.7" height="128" fill="#9932cc"/>
<rect x="318.6" y="410" width="8.4" height="128" fill="#9932cc"/>
<rect x="330.0" y="410" width="9.7" height="128" fill="#9932cc"/>
<rect x="350.0" y="410" width="9.7" height="128" fill="#9932cc"/>
<rect x="384.0" y="410" width="8.5" height="128" fill="#9932cc"/>
<rect x="407.0" y="410" width="9.0" height="128" fill="#9932cc"/>
<rect x="458.4" y="410" width="160.2" height="128" fill="#9932cc"/>
<rect x="692.5" y="410" width="367.8" height="128" fill="#9932cc"/>
<rect x="1111.4" y="410" width="72.3" height="128" fill="#9932cc"/>
<rect x="1255.0" y="410" width="748.0" height="128" fill="#9932cc"/>
<rect x="474.1" y="411" width="2.8" height="126" fill="#ecc4fb"/>
<rect x="511.1" y="411" width="2.8" height="126" fill="#ecc4fb"/>
<rect x="524.0" y="411" width="2.8" height="126" fill="#ecc4fb"/>
<rect x="548.4" y="411" width="2.8" height="126" fill="#ecc4fb"/>
<rect x="561.1" y="411" width="2.8" height="126" fill="#ecc4fb"/>
<rect x="598.2" y="411" width="2.8" height="126" fill="#ecc4fb"/>
<rect x="758.6" y="411" width="2.8" height="126" fill="#ecc4fb"/>
<rect x="795.9" y="411" width="2.8" height="126" fill="#ecc4fb"/>
<rect x="800.0" y="411" width="2.8" height="126" fill="#ecc4fb"/>
<rect x="845.4" y="411" width="2.8" height="126" fill="#ecc4fb"/>
<rect x="956.5" y="411" width="2.8" height="126" fill="#ecc4fb"/>
<rect x="993.3" y="411" width="2.8" height="126" fill="#ecc4fb"/>
<rect x="1006.1" y="411" width="2.8" height="126" fill="#ecc4fb"/>
<rect x="1030.8" y="411" width="2.8" height="126" fill="#ecc4fb"/>
<rect x="1120.6" y="411" width="2.8" height="126" fill="#ecc4fb"/>
<rect x="1146.4" y="411" width="2.8" height="126" fill="#ecc4fb"/>
<rect x="1170.6" y="411" width="2.8" height="126" fill="#ecc4fb"/>
<rect x="1302.8" y="411" width="2.8" height="126" fill="#ecc4fb"/>
<rect x="1339.6" y="411" width="2.8" height="126" fill="#ecc4fb"/>
<rect x="1376.5" y="411" width="2.8" height="126" fill="#ecc4fb"/>
<rect x="1413.6" y="411" width="2.8" height="126" fill="#ecc4fb"/>
<rect x="1500.4" y="411" width="2.8" height="126" fill="#ecc4fb"/>
<rect x="1537.7" y="411" width="2.8" height="126" fill="#ecc4fb"/>
<rect x="1574.6" y="411" width="2.8" height="126" fill="#ecc4fb"/>
<rect x="1587.3" y="411" width="2.8" height="126" fill="#ecc4fb"/>
<rect x="1624.2" y="411" width="2.8" height="126" fill="#ecc4fb"/>
<rect x="1661.3" y="411" width="2.8" height="126" fill="#ecc4fb"/>
<rect x="1735.0" y="411" width="2.8" height="126" fill="#ecc4fb"/>
<rect x="1785.1" y="411" width="2.8" height="126" fill="#ecc4fb"/>
<rect x="1822.6" y="411" width="2.8" height="126" fill="#ecc4fb"/>
<rect x="1896.5" y="411" width="2.8" height="126" fill="#ecc4fb"/>
<rect x="1933.4" y="411" width="2.8" height="126" fill="#ecc4fb"/>
<rect x="1970.6" y="411" width="2.8" height="126" fill="#ecc4fb"/>
<rect x="1982.3" y="411" width="2.8" height="126" fill="#ecc4fb"/>
<path d="M125 537.5 H155.3 M137.3 537.5 V410 M155 410.5 H243 M243 537.5 H266 M266 410.5 H1063.8 V537.5 H1109 V410 M1090.8 537.5 V410 M1109 410.5 H2003" fill="none" stroke="#a550d8" stroke-width="1.4"/>
<rect x="155.3" y="695" width="32.0" height="127" fill="#5552c8"/>
<rect x="192.0" y="695" width="8.3" height="127" fill="#5552c8"/>
<rect x="204.8" y="695" width="8.2" height="127" fill="#5552c8"/>
<rect x="217.5" y="695" width="8.5" height="127" fill="#5552c8"/>
<rect x="236.0" y="695" width="7.0" height="127" fill="#5552c8"/>
<rect x="266.0" y="695" width="9.3" height="127" fill="#5552c8"/>
<rect x="280.3" y="695" width="20.7" height="127" fill="#5552c8"/>
<rect x="305.8" y="695" width="9.7" height="127" fill="#5552c8"/>
<rect x="318.6" y="695" width="8.4" height="127" fill="#5552c8"/>
<rect x="330.0" y="695" width="9.7" height="127" fill="#5552c8"/>
<rect x="350.0" y="695" width="9.7" height="127" fill="#5552c8"/>
<rect x="384.0" y="695" width="8.5" height="127" fill="#5552c8"/>
<rect x="407.0" y="695" width="9.0" height="127" fill="#5552c8"/>
<rect x="458.4" y="695" width="160.2" height="127" fill="#5552c8"/>
<rect x="692.5" y="695" width="367.8" height="127" fill="#5552c8"/>
<rect x="1111.4" y="695" width="72.3" height="127" fill="#5552c8"/>
<rect x="1255.0" y="695" width="748.0" height="127" fill="#5552c8"/>
<rect x="474.1" y="696" width="2.8" height="125" fill="#c8c8fb"/>
<rect x="511.1" y="696" width="2.8" height="125" fill="#c8c8fb"/>
<rect x="524.0" y="696" width="2.8" height="125" fill="#c8c8fb"/>
<rect x="548.4" y="696" width="2.8" height="125" fill="#c8c8fb"/>
<rect x="561.1" y="696" width="2.8" height="125" fill="#c8c8fb"/>
<rect x="598.2" y="696" width="2.8" height="125" fill="#c8c8fb"/>
<rect x="758.6" y="696" width="2.8" height="125" fill="#c8c8fb"/>
<rect x="795.9" y="696" width="2.8" height="125" fill="#c8c8fb"/>
<rect x="800.0" y="696" width="2.8" height="125" fill="#c8c8fb"/>
<rect x="845.4" y="696" width="2.8" height="125" fill="#c8c8fb"/>
<rect x="956.5" y="696" width="2.8" height="125" fill="#c8c8fb"/>
<rect x="993.3" y="696" width="2.8" height="125" fill="#c8c8fb"/>
<rect x="1006.1" y="696" width="2.8" height="125" fill="#c8c8fb"/>
<rect x="1030.8" y="696" width="2.8" height="125" fill="#c8c8fb"/>
<rect x="1120.6" y="696" width="2.8" height="125" fill="#c8c8fb"/>
<rect x="1146.4" y="696" width="2.8" height="125" fill="#c8c8fb"/>
<rect x="1170.6" y="696" width="2.8" height="125" fill="#c8c8fb"/>
<rect x="1302.8" y="696" width="2.8" height="125" fill="#c8c8fb"/>
<rect x="1339.6" y="696" width="2.8" height="125" fill="#c8c8fb"/>
<rect x="1376.5" y="696" width="2.8" height="125" fill="#c8c8fb"/>
<rect x="1413.6" y="696" width="2.8" height="125" fill="#c8c8fb"/>
<rect x="1500.4" y="696" width="2.8" height="125" fill="#c8c8fb"/>
<rect x="1537.7" y="696" width="2.8" height="125" fill="#c8c8fb"/>
<rect x="1574.6" y="696" width="2.8" height="125" fill="#c8c8fb"/>
<rect x="1587.3" y="696" width="2.8" height="125" fill="#c8c8fb"/>
<rect x="1624.2" y="696" width="2.8" height="125" fill="#c8c8fb"/>
<rect x="1661.3" y="696" width="2.8" height="125" fill="#c8c8fb"/>
<rect x="1735.0" y="696" width="2.8" height="125" fill="#c8c8fb"/>
<rect x="1785.1" y="696" width="2.8" height="125" fill="#c8c8fb"/>
<rect x="1822.6" y="696" width="2.8" height="125" fill="#c8c8fb"/>
<rect x="1896.5" y="696" width="2.8" height="125" fill="#c8c8fb"/>
<rect x="1933.4" y="696" width="2.8" height="125" fill="#c8c8fb"/>
<rect x="1970.6" y="696" width="2.8" height="125" fill="#c8c8fb"/>
<rect x="1982.3" y="696" width="2.8" height="125" fill="#c8c8fb"/>
<path d="M125 821.5 H137.3 V695.5 H275.3 M155 821.5 H243 V695.5 M275 821.5 H1063.8 M1063.8 695.5 V821.5 H1090.8 V695.5 H1109 V821.5 M1109 821.5 H2003" fill="none" stroke="#7070d8" stroke-width="1.4"/>
<line x1="311.9" y1="411" x2="311.9" y2="537" stroke="#e0d8f0" stroke-opacity="0.55" stroke-width="1" stroke-dasharray="6,3,1,3"/>
<line x1="311.9" y1="696" x2="311.9" y2="821" stroke="#e0d8f0" stroke-opacity="0.55" stroke-width="1" stroke-dasharray="6,3,1,3"/>
<line x1="499.8" y1="411" x2="499.8" y2="537" stroke="#e0d8f0" stroke-opacity="0.55" stroke-width="1" stroke-dasharray="6,3,1,3"/>
<line x1="499.8" y1="696" x2="499.8" y2="821" stroke="#e0d8f0" stroke-opacity="0.55" stroke-width="1" stroke-dasharray="6,3,1,3"/>
<line x1="687.7" y1="411" x2="687.7" y2="537" stroke="#e0d8f0" stroke-opacity="0.55" stroke-width="1" stroke-dasharray="6,3,1,3"/>
<line x1="687.7" y1="696" x2="687.7" y2="821" stroke="#e0d8f0" stroke-opacity="0.55" stroke-width="1" stroke-dasharray="6,3,1,3"/>
<line x1="875.6" y1="411" x2="875.6" y2="537" stroke="#e0d8f0" stroke-opacity="0.55" stroke-width="1" stroke-dasharray="6,3,1,3"/>
<line x1="875.6" y1="696" x2="875.6" y2="821" stroke="#e0d8f0" stroke-opacity="0.55" stroke-width="1" stroke-dasharray="6,3,1,3"/>
<line x1="1063.5" y1="411" x2="1063.5" y2="537" stroke="#e0d8f0" stroke-opacity="0.55" stroke-width="1" stroke-dasharray="6,3,1,3"/>
<line x1="1063.5" y1="696" x2="1063.5" y2="821" stroke="#e0d8f0" stroke-opacity="0.55" stroke-width="1" stroke-dasharray="6,3,1,3"/>
<line x1="1251.4" y1="411" x2="1251.4" y2="537" stroke="#e0d8f0" stroke-opacity="0.55" stroke-width="1" stroke-dasharray="6,3,1,3"/>
<line x1="1251.4" y1="696" x2="1251.4" y2="821" stroke="#e0d8f0" stroke-opacity="0.55" stroke-width="1" stroke-dasharray="6,3,1,3"/>
<line x1="1439.3" y1="411" x2="1439.3" y2="537" stroke="#e0d8f0" stroke-opacity="0.55" stroke-width="1" stroke-dasharray="6,3,1,3"/>
<line x1="1439.3" y1="696" x2="1439.3" y2="821" stroke="#e0d8f0" stroke-opacity="0.55" stroke-width="1" stroke-dasharray="6,3,1,3"/>
<line x1="1627.2" y1="411" x2="1627.2" y2="537" stroke="#e0d8f0" stroke-opacity="0.55" stroke-width="1" stroke-dasharray="6,3,1,3"/>
<line x1="1627.2" y1="696" x2="1627.2" y2="821" stroke="#e0d8f0" stroke-opacity="0.55" stroke-width="1" stroke-dasharray="6,3,1,3"/>
<line x1="1815.1" y1="411" x2="1815.1" y2="537" stroke="#e0d8f0" stroke-opacity="0.55" stroke-width="1" stroke-dasharray="6,3,1,3"/>
<line x1="1815.1" y1="696" x2="1815.1" y2="821" stroke="#e0d8f0" stroke-opacity="0.55" stroke-width="1" stroke-dasharray="6,3,1,3"/>
<line x1="2002.5" y1="411" x2="2002.5" y2="537" stroke="#e0d8f0" stroke-opacity="0.55" stroke-width="1" stroke-dasharray="6,3,1,3"/>
<line x1="2002.5" y1="696" x2="2002.5" y2="821" stroke="#e0d8f0" stroke-opacity="0.55" stroke-width="1" stroke-dasharray="6,3,1,3"/>
<line x1="414" y1="262" x2="414" y2="828.5" stroke="#9932cc" stroke-width="3"/>
<rect x="412.5" y="262" width="26" height="24" fill="#9932cc"/>
<text x="425.5" y="280" font-size="14" fill="#fff" text-anchor="middle" font-weight="bold" textLength="20" lengthAdjust="spacingAndGlyphs" xml:space="preserve" style="white-space:pre" >M2</text>
<path d="M549.06 322.7 L241 326 L542.24 352 A210.3 76.6 0 1 0 549.06 322.7 Z" fill="#5b9bd5" stroke="#1c3f62" stroke-width="3.7" stroke-linejoin="miter" stroke-miterlimit="4"/>
<text x="690.7" y="359.4" font-size="37.5" fill="#fff" text-anchor="start" font-weight="normal" textLength="121.3" lengthAdjust="spacingAndGlyphs" xml:space="preserve" style="white-space:pre" >Restart</text>
<path d="M1514.96 312.4 L1080 316 L1508.19 341.6 A210 77 0 1 0 1514.96 312.4 Z" fill="#5b9bd5" stroke="#1c3f62" stroke-width="3.7" stroke-linejoin="miter" stroke-miterlimit="4"/>
<text x="1611.3" y="348.3" font-size="37.5" fill="#fff" text-anchor="start" font-weight="normal" textLength="209" lengthAdjust="spacingAndGlyphs" xml:space="preserve" style="white-space:pre" >Power Cycle</text>
<path d="M932.05 621.9 L131 626 L931.71 642.7 A160.2 55.1 0 1 0 932.05 621.9 Z" fill="#5b9bd5" stroke="#1c3f62" stroke-width="3.7" stroke-linejoin="miter" stroke-miterlimit="4"/>
<text x="1034.6" y="649.9" font-size="36.6" fill="#fff" text-anchor="start" font-weight="normal" textLength="107.5" lengthAdjust="spacingAndGlyphs" xml:space="preserve" style="white-space:pre" >Power</text>
<text x="707" y="467" font-size="42" fill="#fff" text-anchor="start" font-weight="normal" textLength="318" lengthAdjust="spacingAndGlyphs" xml:space="preserve" style="white-space:pre" >Low Power entry</text>
<text x="707" y="524" font-size="42" fill="#fff" text-anchor="start" font-weight="normal" textLength="148" lengthAdjust="spacingAndGlyphs" xml:space="preserve" style="white-space:pre" >and exit</text>
<rect x="20" y="871.5" width="2012" height="5.5" rx="2.7" fill="#e4e4e8"/>
<line x1="1025" y1="872" x2="1025" y2="908" stroke="#999" stroke-width="1.2"/><line x1="1031" y1="872" x2="1031" y2="908" stroke="#999" stroke-width="1.2"/>
<ellipse cx="132.5" cy="567" rx="47" ry="309.5" fill="none" stroke="#70ad47" stroke-width="4"/>
<rect x="18" y="877.7" width="201" height="34.8" fill="#0a74cc"/>
<rect x="18" y="908" width="2020" height="4.5" fill="#0a70c4"/>
<rect x="219" y="877.7" width="180" height="31.8" fill="#03a9f4"/>
<text x="26" y="901" font-size="17" fill="#fff" stroke="#fff" stroke-width="0.35" text-anchor="start" font-weight="normal" textLength="180" lengthAdjust="spacingAndGlyphs" xml:space="preserve" style="white-space:pre" >Measurement Summary</text>
<text x="226" y="901" font-size="17" fill="#fff" stroke="#fff" stroke-width="0.35" text-anchor="start" font-weight="normal" textLength="160" lengthAdjust="spacingAndGlyphs" xml:space="preserve" style="white-space:pre" >Measurement Details</text>
<rect x="26.5" y="920.5" width="2003" height="239" fill="#efefef" stroke="#8aa2bc" stroke-width="1.6"/>
<rect x="27" y="921" width="9" height="170" fill="#eef0f2"/>
<rect x="36" y="921" width="1993" height="36.5" fill="#03a9f4"/>
<text x="146.72222222222223" y="945" font-size="17" fill="#fff" stroke="#fff" stroke-width="0.35" text-anchor="middle" font-weight="normal" xml:space="preserve" style="white-space:pre" >Index</text>
<text x="368.1666666666667" y="945" font-size="17" fill="#fff" stroke="#fff" stroke-width="0.35" text-anchor="middle" font-weight="normal" xml:space="preserve" style="white-space:pre" >Name</text>
<text x="589.6111111111111" y="945" font-size="17" fill="#fff" stroke="#fff" stroke-width="0.35" text-anchor="middle" font-weight="normal" xml:space="preserve" style="white-space:pre" >Low Limit</text>
<text x="811.0555555555557" y="945" font-size="17" fill="#fff" stroke="#fff" stroke-width="0.35" text-anchor="middle" font-weight="normal" xml:space="preserve" style="white-space:pre" >High Limit</text>
<text x="1032.5" y="945" font-size="17" fill="#fff" stroke="#fff" stroke-width="0.35" text-anchor="middle" font-weight="normal" xml:space="preserve" style="white-space:pre" >Min</text>
<text x="1253.9444444444443" y="945" font-size="17" fill="#fff" stroke="#fff" stroke-width="0.35" text-anchor="middle" font-weight="normal" xml:space="preserve" style="white-space:pre" >Max</text>
<text x="1475.3888888888891" y="945" font-size="17" fill="#fff" stroke="#fff" stroke-width="0.35" text-anchor="middle" font-weight="normal" xml:space="preserve" style="white-space:pre" >Mean</text>
<text x="1696.8333333333335" y="945" font-size="17" fill="#fff" stroke="#fff" stroke-width="0.35" text-anchor="middle" font-weight="normal" xml:space="preserve" style="white-space:pre" >Result</text>
<text x="1918.2777777777778" y="945" font-size="17" fill="#fff" stroke="#fff" stroke-width="0.35" text-anchor="middle" font-weight="normal" xml:space="preserve" style="white-space:pre" >Hits</text>
<rect x="36" y="957.5" width="1993" height="25.5" fill="#0078d7"/>
<rect x="36" y="983" width="1993" height="27" fill="#fff"/>
<rect x="36" y="1010" width="1993" height="27" fill="#fff"/>
<rect x="36" y="1037" width="1993" height="27" fill="#fff"/>
<rect x="36" y="1064" width="1993" height="27" fill="#fff"/>
<line x1="27" y1="983" x2="2029" y2="983" stroke="#e2e2e2" stroke-width="1"/>
<line x1="27" y1="1010" x2="2029" y2="1010" stroke="#e2e2e2" stroke-width="1"/>
<line x1="27" y1="1037" x2="2029" y2="1037" stroke="#e2e2e2" stroke-width="1"/>
<line x1="27" y1="1064" x2="2029" y2="1064" stroke="#e2e2e2" stroke-width="1"/>
<line x1="27" y1="1091" x2="2029" y2="1091" stroke="#e2e2e2" stroke-width="1"/>
<line x1="257.4" y1="957.5" x2="257.4" y2="1091" stroke="#e0e0e0" stroke-width="1"/>
<line x1="478.9" y1="957.5" x2="478.9" y2="1091" stroke="#e0e0e0" stroke-width="1"/>
<line x1="700.3" y1="957.5" x2="700.3" y2="1091" stroke="#e0e0e0" stroke-width="1"/>
<line x1="921.8" y1="957.5" x2="921.8" y2="1091" stroke="#e0e0e0" stroke-width="1"/>
<line x1="1143.2" y1="957.5" x2="1143.2" y2="1091" stroke="#e0e0e0" stroke-width="1"/>
<line x1="1364.7" y1="957.5" x2="1364.7" y2="1091" stroke="#e0e0e0" stroke-width="1"/>
<line x1="1586.1" y1="957.5" x2="1586.1" y2="1091" stroke="#e0e0e0" stroke-width="1"/>
<line x1="1807.6" y1="957.5" x2="1807.6" y2="1091" stroke="#e0e0e0" stroke-width="1"/>
<line x1="921.8" y1="957.5" x2="921.8" y2="983" stroke="#9fd2f5" stroke-width="1.3"/>
<line x1="1143.2" y1="957.5" x2="1143.2" y2="983" stroke="#9fd2f5" stroke-width="1.3"/>
<line x1="1364.7" y1="957.5" x2="1364.7" y2="983" stroke="#9fd2f5" stroke-width="1.3"/>
<line x1="1586.1" y1="957.5" x2="1586.1" y2="983" stroke="#9fd2f5" stroke-width="1.3"/>
<line x1="1807.6" y1="957.5" x2="1807.6" y2="983" stroke="#9fd2f5" stroke-width="1.3"/>
<rect x="258.4" y="958.5" width="219.4" height="24" fill="none" stroke="#111" stroke-width="2"/>
<text x="146.72222222222223" y="973.8" font-size="16" fill="#fff" stroke="#fff" stroke-width="0.35" text-anchor="middle" font-weight="normal" xml:space="preserve" style="white-space:pre" >1</text>
<text x="368.1666666666667" y="973.8" font-size="16" fill="#fff" stroke="#fff" stroke-width="0.35" text-anchor="middle" font-weight="normal" xml:space="preserve" style="white-space:pre" >T_CRHoff</text>
<text x="589.6111111111111" y="973.8" font-size="16" fill="#fff" stroke="#fff" stroke-width="0.35" text-anchor="middle" font-weight="normal" xml:space="preserve" style="white-space:pre" >0.0000s</text>
<text x="811.0555555555557" y="973.8" font-size="16" fill="#fff" stroke="#fff" stroke-width="0.35" text-anchor="middle" font-weight="normal" xml:space="preserve" style="white-space:pre" >NA</text>
<text x="1032.5" y="975.8" font-size="16" fill="#fff" stroke="#fff" stroke-width="0.35" text-anchor="middle" font-weight="normal" xml:space="preserve" style="white-space:pre" >0.0000s</text>
<text x="1253.9444444444443" y="975.8" font-size="16" fill="#fff" stroke="#fff" stroke-width="0.35" text-anchor="middle" font-weight="normal" xml:space="preserve" style="white-space:pre" >776.7658ms</text>
<text x="1475.3888888888891" y="975.8" font-size="16" fill="#fff" stroke="#fff" stroke-width="0.35" text-anchor="middle" font-weight="normal" xml:space="preserve" style="white-space:pre" >116.7716µs</text>
<text x="1696.8333333333335" y="973.8" font-size="16" fill="#fff" stroke="#fff" stroke-width="0.35" text-anchor="middle" font-weight="normal" xml:space="preserve" style="white-space:pre" >PASS*</text>
<text x="1918.2777777777778" y="973.8" font-size="16" fill="#fff" stroke="#fff" stroke-width="0.35" text-anchor="middle" font-weight="normal" xml:space="preserve" style="white-space:pre" >43823</text>
<text x="146.72222222222223" y="1000.4" font-size="16" fill="#1a1a1a" stroke="#1a1a1a" stroke-width="0.35" text-anchor="middle" font-weight="normal" xml:space="preserve" style="white-space:pre" >2</text>
<text x="368.1666666666667" y="1000.4" font-size="16" fill="#1a1a1a" stroke="#1a1a1a" stroke-width="0.35" text-anchor="middle" font-weight="normal" xml:space="preserve" style="white-space:pre" >T_CRLon</text>
<text x="589.6111111111111" y="1000.4" font-size="16" fill="#1a1a1a" stroke="#1a1a1a" stroke-width="0.35" text-anchor="middle" font-weight="normal" xml:space="preserve" style="white-space:pre" >NA</text>
<text x="811.0555555555557" y="1000.4" font-size="16" fill="#1a1a1a" stroke="#1a1a1a" stroke-width="0.35" text-anchor="middle" font-weight="normal" xml:space="preserve" style="white-space:pre" >NA</text>
<text x="1032.5" y="1002.4" font-size="16" fill="#1a1a1a" stroke="#1a1a1a" stroke-width="0.35" text-anchor="middle" font-weight="normal" xml:space="preserve" style="white-space:pre" >0.0000s</text>
<text x="1253.9444444444443" y="1002.4" font-size="16" fill="#1a1a1a" stroke="#1a1a1a" stroke-width="0.35" text-anchor="middle" font-weight="normal" xml:space="preserve" style="white-space:pre" >812.6289ms</text>
<text x="1475.3888888888891" y="1002.4" font-size="16" fill="#1a1a1a" stroke="#1a1a1a" stroke-width="0.35" text-anchor="middle" font-weight="normal" xml:space="preserve" style="white-space:pre" >1.1929ms</text>
<text x="1918.2777777777778" y="1000.4" font-size="16" fill="#1a1a1a" stroke="#1a1a1a" stroke-width="0.35" text-anchor="middle" font-weight="normal" xml:space="preserve" style="white-space:pre" >43825</text>
<text x="146.72222222222223" y="1027.4" font-size="16" fill="#1a1a1a" stroke="#1a1a1a" stroke-width="0.35" text-anchor="middle" font-weight="normal" xml:space="preserve" style="white-space:pre" >3</text>
<text x="368.1666666666667" y="1027.4" font-size="16" fill="#1a1a1a" stroke="#1a1a1a" stroke-width="0.35" text-anchor="middle" font-weight="normal" xml:space="preserve" style="white-space:pre" >T_PVPGL</text>
<text x="589.6111111111111" y="1027.4" font-size="16" fill="#1a1a1a" stroke="#1a1a1a" stroke-width="0.35" text-anchor="middle" font-weight="normal" xml:space="preserve" style="white-space:pre" >50.0000ms</text>
<text x="811.0555555555557" y="1027.4" font-size="16" fill="#1a1a1a" stroke="#1a1a1a" stroke-width="0.35" text-anchor="middle" font-weight="normal" xml:space="preserve" style="white-space:pre" >NA</text>
<text x="1032.5" y="1029.4" font-size="16" fill="#1a1a1a" stroke="#1a1a1a" stroke-width="0.35" text-anchor="middle" font-weight="normal" xml:space="preserve" style="white-space:pre" >422.4754ms</text>
<text x="1253.9444444444443" y="1029.4" font-size="16" fill="#1a1a1a" stroke="#1a1a1a" stroke-width="0.35" text-anchor="middle" font-weight="normal" xml:space="preserve" style="white-space:pre" >430.7723ms</text>
<text x="1475.3888888888891" y="1029.4" font-size="16" fill="#1a1a1a" stroke="#1a1a1a" stroke-width="0.35" text-anchor="middle" font-weight="normal" xml:space="preserve" style="white-space:pre" >426.6239ms</text>
<text x="1696.8333333333335" y="1027.4" font-size="16" fill="#1a1a1a" stroke="#1a1a1a" stroke-width="0.35" text-anchor="middle" font-weight="normal" xml:space="preserve" style="white-space:pre" >PASS</text>
<text x="1918.2777777777778" y="1027.4" font-size="16" fill="#1a1a1a" stroke="#1a1a1a" stroke-width="0.35" text-anchor="middle" font-weight="normal" xml:space="preserve" style="white-space:pre" >2</text>
<text x="146.72222222222223" y="1054.4" font-size="16" fill="#1a1a1a" stroke="#1a1a1a" stroke-width="0.35" text-anchor="middle" font-weight="normal" xml:space="preserve" style="white-space:pre" >4</text>
<text x="368.1666666666667" y="1054.4" font-size="16" fill="#1a1a1a" stroke="#1a1a1a" stroke-width="0.35" text-anchor="middle" font-weight="normal" xml:space="preserve" style="white-space:pre" >T_PERST-CLK</text>
<text x="589.6111111111111" y="1054.4" font-size="16" fill="#1a1a1a" stroke="#1a1a1a" stroke-width="0.35" text-anchor="middle" font-weight="normal" xml:space="preserve" style="white-space:pre" >100.0000µs</text>
<text x="811.0555555555557" y="1054.4" font-size="16" fill="#1a1a1a" stroke="#1a1a1a" stroke-width="0.35" text-anchor="middle" font-weight="normal" xml:space="preserve" style="white-space:pre" >NA</text>
<text x="1032.5" y="1056.4" font-size="16" fill="#1a1a1a" stroke="#1a1a1a" stroke-width="0.35" text-anchor="middle" font-weight="normal" xml:space="preserve" style="white-space:pre" >161.2493ms</text>
<text x="1253.9444444444443" y="1056.4" font-size="16" fill="#1a1a1a" stroke="#1a1a1a" stroke-width="0.35" text-anchor="middle" font-weight="normal" xml:space="preserve" style="white-space:pre" >303.2133ms</text>
<text x="1475.3888888888891" y="1056.4" font-size="16" fill="#1a1a1a" stroke="#1a1a1a" stroke-width="0.35" text-anchor="middle" font-weight="normal" xml:space="preserve" style="white-space:pre" >208.7361ms</text>
<text x="1696.8333333333335" y="1054.4" font-size="16" fill="#1a1a1a" stroke="#1a1a1a" stroke-width="0.35" text-anchor="middle" font-weight="normal" xml:space="preserve" style="white-space:pre" >PASS</text>
<text x="1918.2777777777778" y="1054.4" font-size="16" fill="#1a1a1a" stroke="#1a1a1a" stroke-width="0.35" text-anchor="middle" font-weight="normal" xml:space="preserve" style="white-space:pre" >3</text>
<text x="146.72222222222223" y="1081.4" font-size="16" fill="#1a1a1a" stroke="#1a1a1a" stroke-width="0.35" text-anchor="middle" font-weight="normal" xml:space="preserve" style="white-space:pre" >5</text>
<text x="368.1666666666667" y="1081.4" font-size="16" fill="#1a1a1a" stroke="#1a1a1a" stroke-width="0.35" text-anchor="middle" font-weight="normal" xml:space="preserve" style="white-space:pre" >T_PERST</text>
<text x="589.6111111111111" y="1081.4" font-size="16" fill="#1a1a1a" stroke="#1a1a1a" stroke-width="0.35" text-anchor="middle" font-weight="normal" xml:space="preserve" style="white-space:pre" >100.0000µs</text>
<text x="811.0555555555557" y="1081.4" font-size="16" fill="#1a1a1a" stroke="#1a1a1a" stroke-width="0.35" text-anchor="middle" font-weight="normal" xml:space="preserve" style="white-space:pre" >NA</text>
<text x="1032.5" y="1083.4" font-size="16" fill="#1a1a1a" stroke="#1a1a1a" stroke-width="0.35" text-anchor="middle" font-weight="normal" xml:space="preserve" style="white-space:pre" >302.0073ms</text>
<text x="1253.9444444444443" y="1083.4" font-size="16" fill="#1a1a1a" stroke="#1a1a1a" stroke-width="0.35" text-anchor="middle" font-weight="normal" xml:space="preserve" style="white-space:pre" >11.1591s</text>
<text x="1475.3888888888891" y="1083.4" font-size="16" fill="#1a1a1a" stroke="#1a1a1a" stroke-width="0.35" text-anchor="middle" font-weight="normal" xml:space="preserve" style="white-space:pre" >5.7961s</text>
<text x="1696.8333333333335" y="1081.4" font-size="16" fill="#1a1a1a" stroke="#1a1a1a" stroke-width="0.35" text-anchor="middle" font-weight="normal" xml:space="preserve" style="white-space:pre" >PASS</text>
<text x="1918.2777777777778" y="1081.4" font-size="16" fill="#1a1a1a" stroke="#1a1a1a" stroke-width="0.35" text-anchor="middle" font-weight="normal" xml:space="preserve" style="white-space:pre" >3</text></svg>
</body></html>
